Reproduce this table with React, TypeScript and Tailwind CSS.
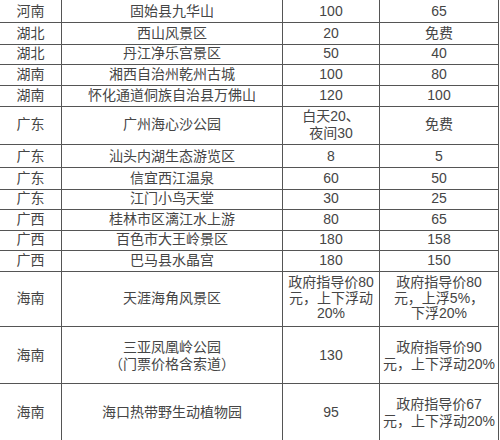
import React from "react";

type Row = { h: string; a: string; b: React.ReactNode; c: React.ReactNode; d: React.ReactNode };

const L2 = ({ lines }: { lines: string[] }) => (
  <div className="leading-[17px]">
    {lines.map((l, i) => (
      <div key={i}>{l}</div>
    ))}
  </div>
);

const L3 = ({ lines }: { lines: string[] }) => (
  <div className="leading-[15.5px]">
    {lines.map((l, i) => (
      <div key={i}>{l}</div>
    ))}
  </div>
);

const rows: Row[] = [
  { h: "h-[22px]", a: "河南", b: "固始县九华山", c: "100", d: "65" },
  { h: "h-[20px]", a: "湖北", b: "西山风景区", c: "20", d: "免费" },
  { h: "h-[21px]", a: "湖北", b: "丹江净乐宫景区", c: "50", d: "40" },
  { h: "h-[21px]", a: "湖南", b: "湘西自治州乾州古城", c: "100", d: "80" },
  { h: "h-[20px]", a: "湖南", b: "怀化通道侗族自治县万佛山", c: "120", d: "100" },
  { h: "h-[41px]", a: "广东", b: "广州海心沙公园", c: <L2 lines={["白天20、", "夜间30"]} />, d: "免费" },
  { h: "h-[22px]", a: "广东", b: "汕头内湖生态游览区", c: "8", d: "5" },
  { h: "h-[20px]", a: "广东", b: "信宜西江温泉", c: "60", d: "50" },
  { h: "h-[21px]", a: "广东", b: "江门小鸟天堂", c: "30", d: "25" },
  { h: "h-[20px]", a: "广西", b: "桂林市区漓江水上游", c: "80", d: "65" },
  { h: "h-[21px]", a: "广西", b: "百色市大王岭景区", c: "180", d: "158" },
  { h: "h-[21px]", a: "广西", b: "巴马县水晶宫", c: "180", d: "150" },
  {
    h: "h-[57px]",
    a: "海南",
    b: "天涯海角风景区",
    c: <L3 lines={["政府指导价80", "元，上下浮动", "20%"]} />,
    d: <L3 lines={["政府指导价80", "元，上浮5%，", "下浮20%"]} />,
  },
  {
    h: "h-[57px]",
    a: "海南",
    b: <L2 lines={["三亚凤凰岭公园", "（门票价格含索道）"]} />,
    c: "130",
    d: <L2 lines={["政府指导价90", "元，上下浮动20%"]} />,
  },
  {
    h: "h-[57px]",
    a: "海南",
    b: "海口热带野生动植物园",
    c: "95",
    d: <L2 lines={["政府指导价67", "元，上下浮动20%"]} />,
  },
];

const cell =
  "flex items-center justify-center text-center border-r border-b border-[#555] pt-px whitespace-nowrap";

export default function App() {
  return (
    <div
      className="w-[500px] h-[440px] overflow-hidden bg-white text-[14px] text-[#454545]"
      style={{ fontFamily: '"Liberation Sans", "Noto Sans CJK SC", sans-serif' }}
    >
      <div className="w-[499px]">
        {rows.map((r, i) => (
          <div key={i} className={`grid grid-cols-[62px_221px_97px_119px] ${r.h}`}>
            <div className={cell}>{r.a}</div>
            <div className={cell}>{r.b}</div>
            <div className={cell}>{r.c}</div>
            <div className={cell}>{r.d}</div>
          </div>
        ))}
      </div>
    </div>
  );
}
